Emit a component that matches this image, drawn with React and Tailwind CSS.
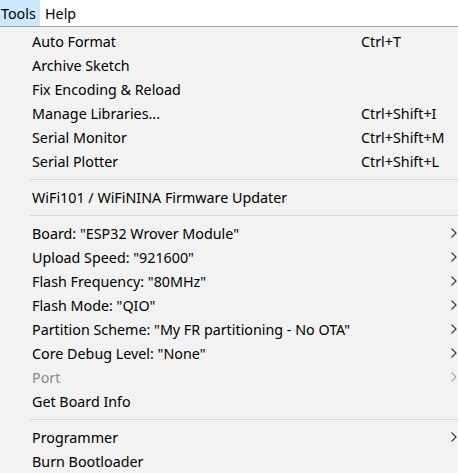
import React from 'react';

const Chevron = ({ dim }) => (
    <svg width="6" height="10" viewBox="0 0 6 10" className="shrink-0">
        <path d="M0.5 0.5 L5 5 L0.5 9.5" fill="none" stroke={dim ? '#a8a8a8' : '#333'} strokeWidth="1.1" />
    </svg>
);

const Item = ({ label, shortcut, sub, disabled }) => (
    <div className="flex items-center h-6 pl-8 pr-0">
        <span className={disabled ? 'text-[#8a8a8a] w-[329px] whitespace-nowrap pt-[3px]' : 'text-black w-[329px] whitespace-nowrap pt-[3px]'}>{label}</span>
        <span className="text-black flex-1 whitespace-nowrap pt-[3px]">{shortcut}</span>
        {sub && <div className="w-[6px] mr-px flex items-center"><Chevron dim={disabled} /></div>}
    </div>
);

const Sep = () => (
    <div className="h-3 flex items-center pl-[30px]">
        <div className="h-px w-full bg-[#d7d7d7]" />
    </div>
);

export default () => (
    <div className="w-[458px] h-[473px] overflow-hidden bg-[#f2f2f2] text-[14.3px] leading-none" style={{ fontFamily: '"Noto Sans", "Open Sans", sans-serif' }}>
        <div className="h-[27px] bg-white flex items-start border-b border-[#a0a0a0]">
            <div className="h-[26px] w-[40px] bg-[#cce8ff] flex items-center pl-px pt-[3px]">Tools</div>
            <div className="h-[26px] flex items-center pl-[5px] pt-[3px]">Help</div>
        </div>
        <div className="pt-[2px]">
            <Item label="Auto Format" shortcut="Ctrl+T" />
            <Item label="Archive Sketch" />
            <Item label="Fix Encoding & Reload" />
            <Item label="Manage Libraries..." shortcut="Ctrl+Shift+I" />
            <Item label="Serial Monitor" shortcut="Ctrl+Shift+M" />
            <Item label="Serial Plotter" shortcut="Ctrl+Shift+L" />
            <Sep />
            <Item label="WiFi101 / WiFiNINA Firmware Updater" />
            <Sep />
            <Item label={'Board: "ESP32 Wrover Module"'} sub />
            <Item label={'Upload Speed: "921600"'} sub />
            <Item label={'Flash Frequency: "80MHz"'} sub />
            <Item label={'Flash Mode: "QIO"'} sub />
            <Item label={'Partition Scheme: "My FR partitioning - No OTA"'} sub />
            <Item label={'Core Debug Level: "None"'} sub />
            <Item label="Port" sub disabled />
            <Item label="Get Board Info" />
            <Sep />
            <Item label="Programmer" sub />
            <Item label="Burn Bootloader" />
        </div>
    </div>
);
